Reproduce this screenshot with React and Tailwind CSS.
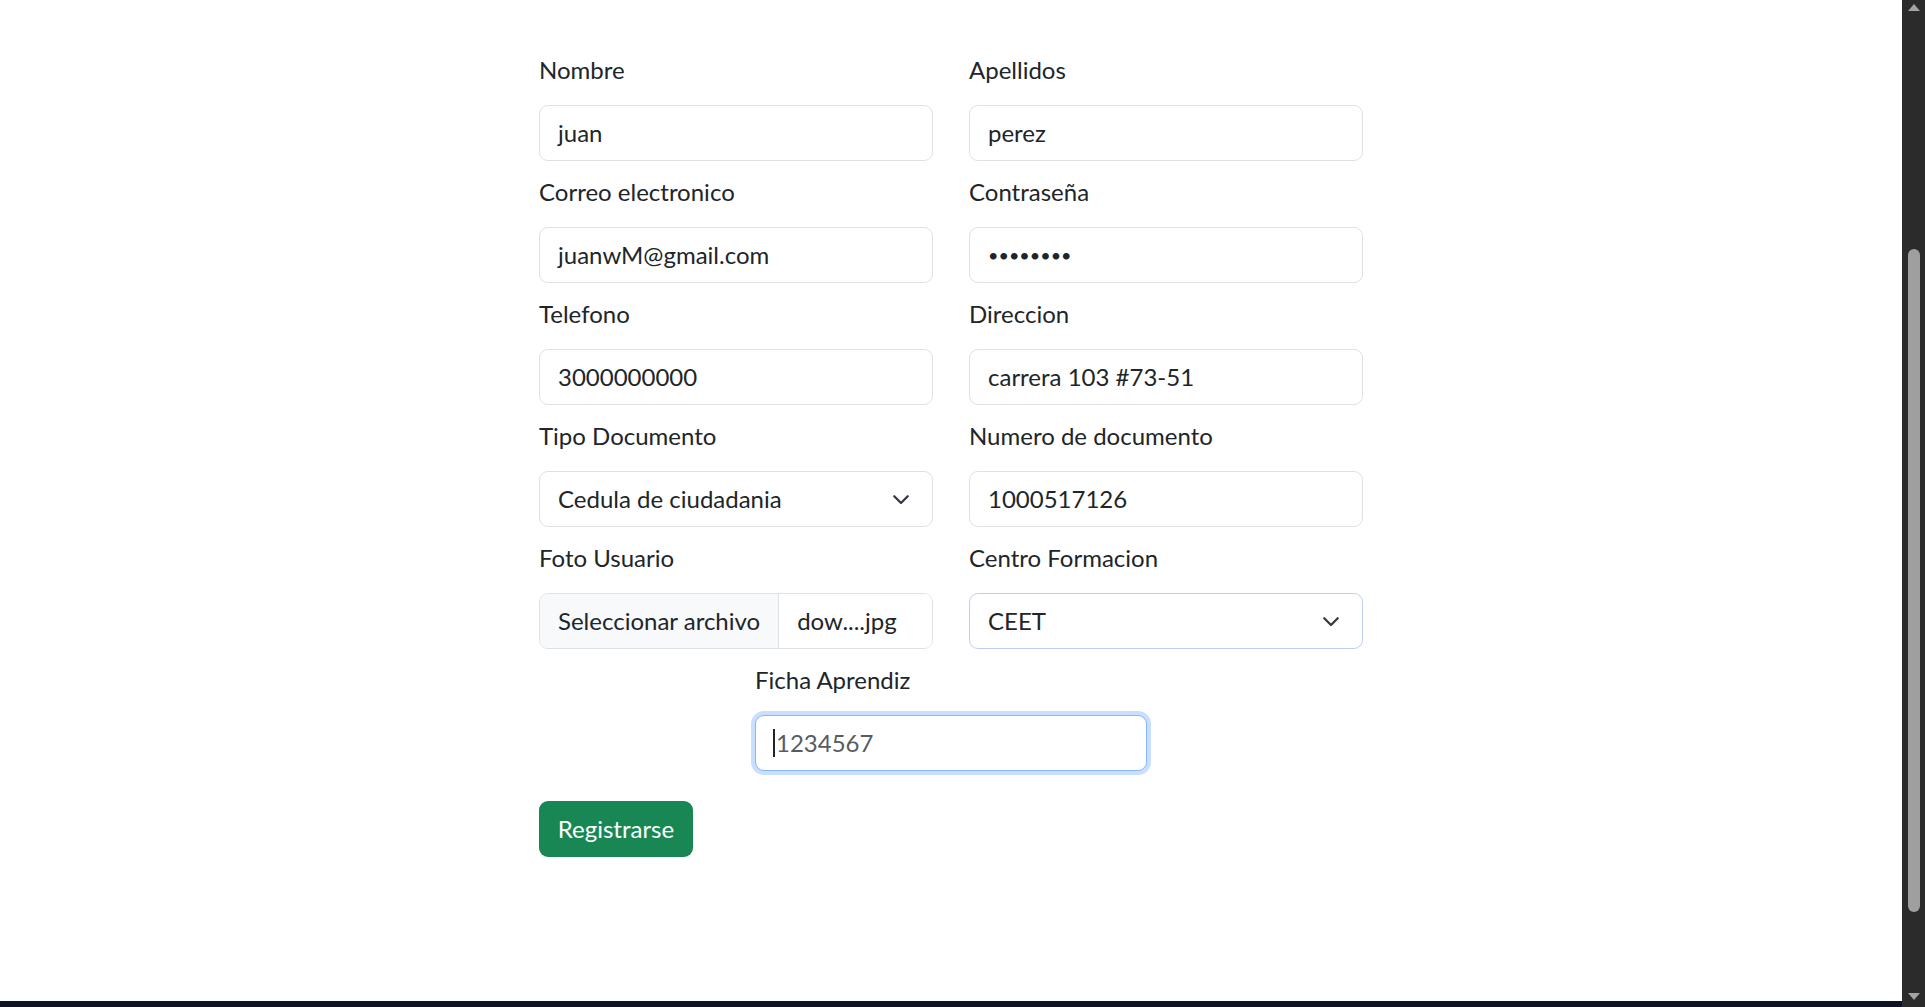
const font = { fontFamily: 'Lato, "Noto Sans", sans-serif' };

function Label({ children }) {
  return <div className="h-9 leading-9 mb-[17px] text-[24px] text-[#212529]">{children}</div>;
}

function Field({ label, value, password }) {
  return (
    <div>
      <Label>{label}</Label>
      <div className="h-[56px] flex items-center px-[18px] border border-[#dee2e6] rounded-[9px] bg-white text-[24px] text-[#212529]">
        {password ? <span className="text-[18px]">{value}</span> : value}
      </div>
    </div>
  );
}

function Select({ label, value, blue }) {
  return (
    <div>
      <Label>{label}</Label>
      <div className={`h-[56px] flex items-center justify-between pl-[18px] pr-[22px] border rounded-[9px] bg-white text-[24px] text-[#212529] ${blue ? 'border-[#bcd0ee]' : 'border-[#dee2e6]'}`}>
        <span>{value}</span>
        <svg width="18" height="14" viewBox="0 0 16 12" fill="none" stroke="#343a40" strokeWidth="2" strokeLinecap="round" strokeLinejoin="round">
          <path d="M2 3.5l6 6 6-6" />
        </svg>
      </div>
    </div>
  );
}

function FileField() {
  return (
    <div>
      <Label>Foto Usuario</Label>
      <div className="h-[56px] flex border border-[#dee2e6] rounded-[9px] overflow-hidden text-[24px] text-[#212529]">
        <div className="flex items-center px-[18px] bg-[#f8f9fa] border-r border-[#dee2e6]">Seleccionar archivo</div>
        <div className="flex items-center px-[18px] bg-white flex-1">dow....jpg</div>
      </div>
    </div>
  );
}

export default function App() {
  return (
    <div className="h-screen flex bg-white overflow-hidden" style={font}>
      <div className="flex-1 flex flex-col">
        <div className="flex-1 pt-[52px]">
          <div className="w-[824px] mx-auto">
            <div className="grid grid-cols-2 gap-x-[36px] gap-y-[13px]">
              <Field label="Nombre" value="juan" />
              <Field label="Apellidos" value="perez" />
              <Field label="Correo electronico" value="juanwM@gmail.com" />
              <Field label="Contraseña" value="••••••••" password />
              <Field label="Telefono" value="3000000000" />
              <Field label="Direccion" value="carrera 103 #73-51" />
              <Select label="Tipo Documento" value="Cedula de ciudadania" />
              <Field label="Numero de documento" value="1000517126" />
              <FileField />
              <Select label="Centro Formacion" value="CEET" blue />
            </div>
            <div className="mt-[13px] w-[392px] mx-auto">
              <Label>Ficha Aprendiz</Label>
              <div className="h-[56px] flex items-center px-[18px] border border-[#86b7fe] rounded-[9px] bg-white text-[24px] text-[#595c5f] shadow-[0_0_0_4px_rgba(13,110,253,0.22)]">
                <span className="w-[2px] h-[28px] bg-[#212529] -ml-[1px] mr-[1px]" />
                1234567
              </div>
            </div>
            <div className="mt-[30px]">
              <button className="h-[56px] w-[154px] rounded-[9px] bg-[#198754] text-white text-[24px]">Registrarse</button>
            </div>
          </div>
        </div>
        <div className="h-[6px] bg-[#0f1423]" />
      </div>
      <div className="w-[23px] bg-[#2b2b2b] flex flex-col items-center">
        <svg width="14" height="9" viewBox="0 0 14 9" className="mt-[3px]">
          <path d="M7 1L13 8H1Z" fill="#a3a3a3" />
        </svg>
        <div className="mt-[237px] w-[12px] h-[663px] rounded-full bg-[#9f9f9f]" />
        <div className="flex-1" />
        <svg width="14" height="9" viewBox="0 0 14 9" className="mb-[6px]">
          <path d="M1 1H13L7 8Z" fill="#a3a3a3" />
        </svg>
      </div>
    </div>
  );
}
